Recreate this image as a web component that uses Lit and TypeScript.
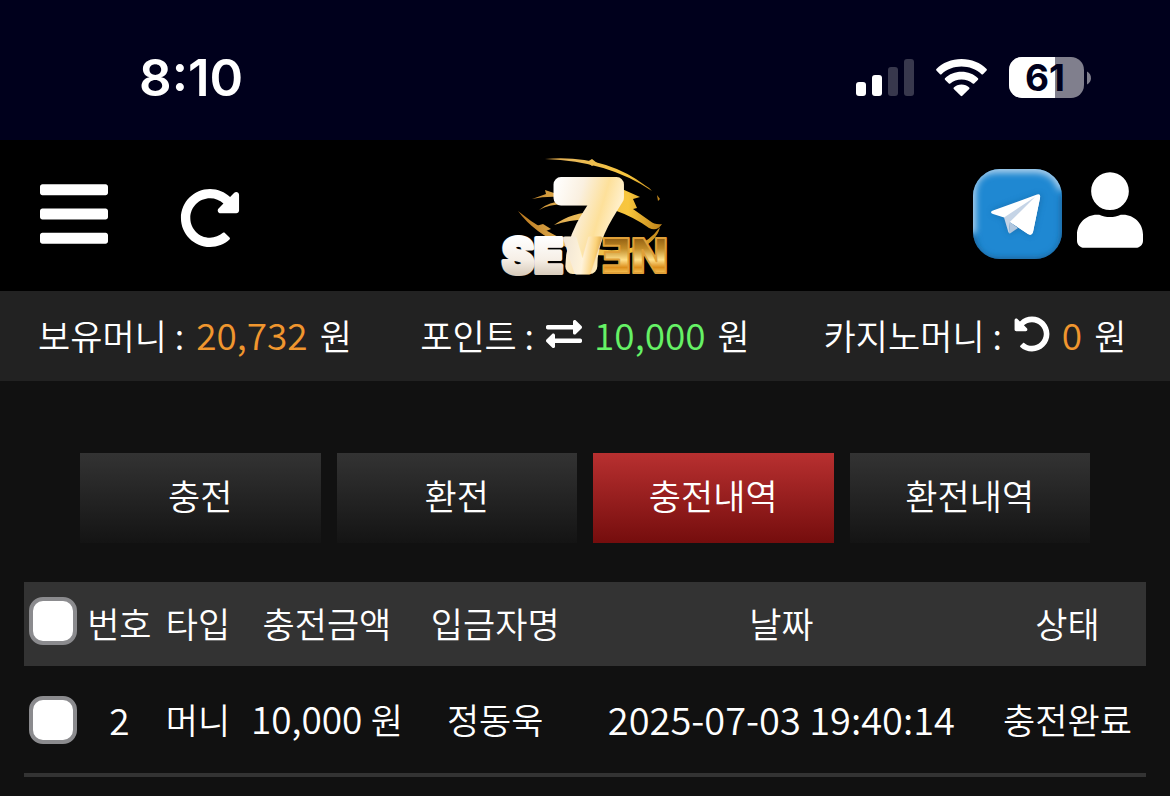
import { LitElement, html, css, svg } from "lit";
import { customElement, property, state } from "lit/decorators.js";
import { classMap } from "lit/directives/class-map.js";

const REDO =
  "M256.455 8c66.269.119 126.437 26.233 170.859 68.685l35.715-35.715C478.149 25.851 504 36.559 504 57.941V192c0 13.255-10.745 24-24 24H345.941c-21.382 0-32.09-25.851-16.971-40.971l41.75-41.75c-30.864-28.899-70.801-44.907-113.23-45.273-92.398-.798-170.283 73.977-169.484 169.442C88.764 348.009 162.184 424 256 424c41.127 0 79.997-14.678 110.629-41.556 4.743-4.161 11.906-3.908 16.368.553l39.662 39.662c4.872 4.872 4.631 12.815-.482 17.433C378.202 479.813 319.926 504 256 504 119.034 504 8.001 392.967 8 256.002 7.991 119.193 119.646 7.755 256.455 8z";
const BARS =
  "M16 132h416c8.837 0 16-7.163 16-16V76c0-8.837-7.163-16-16-16H16C7.163 60 0 67.163 0 76v40c0 8.837 7.163 16 16 16zm0 160h416c8.837 0 16-7.163 16-16v-40c0-8.837-7.163-16-16-16H16c-8.837 0-16 7.163-16 16v40c0 8.837 7.163 16 16 16zm0 160h416c8.837 0 16-7.163 16-16v-40c0-8.837-7.163-16-16-16H16c-8.837 0-16 7.163-16 16v40c0 8.837 7.163 16 16 16z";
const USER =
  "M224 256c70.7 0 128-57.3 128-128S294.7 0 224 0 96 57.3 96 128s57.3 128 128 128zm89.6 32h-16.7c-22.2 10.2-46.9 16-72.9 16s-50.6-5.8-72.9-16h-16.7C60.2 288 0 348.2 0 422.4V464c0 26.5 21.5 48 48 48h352c26.5 0 48-21.5 48-48v-41.6c0-74.2-60.2-134.4-134.4-134.4z";
const EXCHANGE =
  "M0 168v-16c0-13.255 10.745-24 24-24h360V80c0-21.367 25.899-32.042 40.971-16.971l80 80c9.372 9.373 9.372 24.569 0 33.941l-80 80C409.956 271.982 384 261.456 384 240v-48H24c-13.255 0-24-10.745-24-24zm488 152H128v-48c0-21.314-25.862-32.08-40.971-16.971l-80 80c-9.372 9.373-9.372 24.569 0 33.941l80 80C102.057 463.997 128 453.437 128 432v-48h360c13.255 0 24-10.745 24-24v-16c0-13.255-10.745-24-24-24z";

@customElement("status-bar")
class StatusBar extends LitElement {
  static styles = css`
    :host {
      display: flex;
      justify-content: space-between;
      align-items: center;
      height: 140px;
      box-sizing: border-box;
      padding: 16px 78px 0 139px;
      background: #00001c;
      color: #fff;
    }
    .clock {
      font: 600 51px/60px Inter, sans-serif;
    }
    .icons {
      display: flex;
      align-items: center;
      gap: 22px;
    }
    svg {
      display: block;
      overflow: visible;
    }
    .level {
      font: 700 37px Inter, sans-serif;
    }
  `;
  render() {
    return html`
      <span class="clock">8:10</span>
      <div class="icons">
        <svg width="58" height="42" viewBox="0 0 58 42" fill="#fff" aria-hidden="true">
          <rect x="0" y="25" width="10" height="14" rx="3" />
          <rect x="16" y="18" width="10" height="21" rx="3" />
          <rect x="32" y="10" width="10" height="29" rx="3" opacity=".22" />
          <rect x="48" y="2" width="10" height="37" rx="3" opacity=".22" />
        </svg>
        <svg width="51" height="42" viewBox="0 0 51 42" fill="#fff" aria-hidden="true">
          <path d="M25.500 2C35.500 2 44.500 5.800 50.600 12Q51.300 12.700 50.600 13.500L47 17.200Q46.300 17.800 45.500 17.200C40 12.300 33 9.600 25.500 9.600S11 12.300 5.500 17.200Q4.700 17.800 4 17.200L.4 13.500Q-.3 12.700 .4 12C6.500 5.800 15.500 2 25.500 2z" />
          <path d="M25.500 14.800C32 14.800 37.700 17.200 42 21.200Q42.600 22 42 22.700L38.200 26.500Q37.500 27.100 36.700 26.500C33.600 23.900 29.800 22.500 25.500 22.500S17.400 23.900 14.300 26.500Q13.500 27.100 12.800 26.500L9 22.700Q8.400 22 9 21.200C13.300 17.200 19 14.800 25.500 14.800z" />
          <path d="M25.500 27.600C28.500 27.600 31.200 28.700 33.200 30.400Q33.900 31.200 33.200 32L26.300 38.800Q25.500 39.500 24.700 38.800L17.800 32Q17.100 31.200 17.800 30.400C19.800 28.700 22.500 27.600 25.500 27.600z" />
        </svg>
        <svg width="83" height="42" viewBox="0 0 83 42" role="img" aria-label="61%">
          <defs>
            <clipPath id="shell"><rect width="75" height="41" rx="13" /></clipPath>
          </defs>
          <g clip-path="url(#shell)">
            <rect width="75" height="41" fill="#807f8d" />
            <rect width="46" height="41" fill="#fff" />
          </g>
          <path d="M78 14.500C83.300 17 83.300 25 78 27.500z" fill="#807f8d" />
          <text class="level" x="36" y="34" text-anchor="middle" fill="#00001c">61</text>
        </svg>
      </div>
    `;
  }
}

@customElement("seven-logo")
class SevenLogo extends LitElement {
  static styles = css`
    :host,
    svg {
      display: block;
    }
    svg {
      overflow: visible;
    }
    .seven {
      font: 700 118px "Liberation Sans", sans-serif;
    }
    .word {
      font: 900 48px Inter, sans-serif;
    }
  `;
  render() {
    return html`
      <svg width="170" height="124" viewBox="0 0 170 124" role="img" aria-label="SEVEN">
        <defs>
          <linearGradient id="pearl" gradientUnits="userSpaceOnUse" x1="55" y1="25" x2="122" y2="45">
            <stop offset="0" stop-color="#fff" />
            <stop offset=".4" stop-color="#faf0e0" />
            <stop offset=".75" stop-color="#fde09a" />
            <stop offset="1" stop-color="#fff0cc" />
          </linearGradient>
          <linearGradient id="gold" gradientUnits="userSpaceOnUse" x1="0" y1="82" x2="0" y2="120">
            <stop offset="0" stop-color="#8c5a10" />
            <stop offset=".3" stop-color="#c08a26" />
            <stop offset=".6" stop-color="#ffe08a" />
            <stop offset=".8" stop-color="#dd8f1c" />
            <stop offset="1" stop-color="#ffd66b" />
          </linearGradient>
          <linearGradient id="silver" gradientUnits="userSpaceOnUse" x1="0" y1="82" x2="0" y2="120">
            <stop offset="0" stop-color="#fff" />
            <stop offset=".6" stop-color="#f6efe6" />
            <stop offset="1" stop-color="#d8cbbb" />
          </linearGradient>
          <linearGradient id="blend" gradientUnits="userSpaceOnUse" x1="62" y1="90" x2="106" y2="96">
            <stop offset="0" stop-color="#efe4d4" />
            <stop offset=".5" stop-color="#fff3da" />
            <stop offset=".75" stop-color="#fbd27a" />
            <stop offset="1" stop-color="#c98a24" />
          </linearGradient>
          <linearGradient id="streak" gradientUnits="userSpaceOnUse" x1="18" y1="0" x2="165" y2="0">
            <stop offset="0" stop-color="#b9771c" />
            <stop offset=".35" stop-color="#e8b85a" />
            <stop offset=".75" stop-color="#f8c63c" />
            <stop offset="1" stop-color="#b87a14" />
          </linearGradient>
        </defs>
        <g fill="url(#streak)">
          <path d="M45 4Q104-1 146 31Q150 33 152 36Q108 6 45 4z" />
          <path d="M87 7l5-3 5 4-5 3z" />
          <path d="M32 44L46 39 45 35 54 38 70 41 68 43Q50 40 32 44z" />
          <path d="M39 55Q52 44 72 47L70 50Q52 48 39 55z" />
          <path d="M54 70Q72 57 96 57L92 65Q72 64 54 70z" />
          <path d="M122 34L140 42 133 44 137 53 133 54 150 66Q155 70 162 69 157 77 149 73 134 62 114 55z" />
          <path d="M18 56Q42 76 72 88Q108 100 134 92 150 86 160 72 157 87 134 97 102 106 66 92 34 78 18 56z" />
          <path d="M36 71l7-2 8 5-5 2z" />
          <path d="M157 40l3 4-2 2z" />
        </g>
        <text class="seven" x="56" y="111" fill="url(#pearl)" stroke="url(#pearl)" stroke-width="15" stroke-linejoin="round">7</text>
        <text class="word" x="2" y="118" stroke-linejoin="round"><tspan fill="url(#silver)" stroke="url(#silver)" stroke-width="4">SE</tspan><tspan fill="url(#blend)" stroke="url(#blend)" stroke-width="3">V</tspan><tspan fill="url(#gold)" stroke="#e0a038" stroke-width="2">ƎN</tspan></text>
      </svg>
    `;
  }
}

@customElement("site-header")
class SiteHeader extends LitElement {
  static styles = css`
    :host {
      display: grid;
      grid-template-columns: 1fr auto 1fr;
      align-items: center;
      height: 151px;
      box-sizing: border-box;
      padding: 0 27px 0 40px;
      background: #000;
    }
    .side {
      display: flex;
      align-items: center;
      gap: 72px;
      padding-bottom: 4px;
    }
    .end {
      justify-content: flex-end;
      gap: 15px;
    }
    seven-logo {
      margin: 2px 13px 0 0;
    }
    button,
    a {
      display: block;
      padding: 0;
      border: 0;
      background: none;
      color: #fff;
      cursor: pointer;
    }
    svg {
      display: block;
      fill: currentColor;
    }
    .lower {
      padding-top: 8px;
    }
    .raise {
      padding-bottom: 8px;
    }
  `;
  render() {
    return html`
      <div class="side">
        <button aria-label="메뉴"><svg width="68" height="78" viewBox="0 0 448 512"><path d=${BARS} /></svg></button>
        <button class="lower" aria-label="새로고침"><svg width="60" height="60" viewBox="0 0 512 512"><path d=${REDO} /></svg></button>
      </div>
      <seven-logo></seven-logo>
      <div class="side end">
        <a href="#telegram" aria-label="텔레그램">
          <svg width="89" height="90" viewBox="0 0 89 90">
            <defs>
              <clipPath id="tile"><rect width="89" height="90" rx="27" /></clipPath>
              <filter id="soft" x="-20%" y="-20%" width="140%" height="140%"><feGaussianBlur stdDeviation="3" /></filter>
            </defs>
            <g clip-path="url(#tile)">
              <rect width="89" height="90" fill="#1f88d2" />
              <path d="M-2 66Q0 93 26 93H63Q91 92 92 64V26" fill="none" stroke="#1c5f94" stroke-width="8" filter="url(#soft)" />
              <path d="M-2 64V26Q-2 -1 26 -1H63Q84 0 90 20" fill="none" stroke="#a9cdea" stroke-width="10" filter="url(#soft)" />
            </g>
            <path d="M21 45Q17 43 21 41L65 26Q69 24 68 29L60 63Q59 68 55 65L46 59 38 64Q36 65 35 62L31 49z" fill="#12598f" opacity=".5" filter="url(#soft)" />
            <path d="M20 45Q16 43 20 41.500L64 25.500Q68 24 67 29L60 63Q59 67 55 65L37 53 31 48.500z" fill="#fff" />
            <path d="M31 48.500L62 28 37 53 36 64Q35 63 35 62z" fill="#c5d4e6" />
            <path d="M37 53L45 59 37 64.500Q36 65 36 63z" fill="#b0c6de" />
            <path d="M37 53L65 26.500 67 29 60 63Q59 67 55 65z" fill="#fff" />
          </svg>
        </a>
        <button class="raise" aria-label="내 정보"><svg width="66" height="76" viewBox="0 0 448 512"><path d=${USER} /></svg></button>
      </div>
    `;
  }
}

@customElement("balance-bar")
class BalanceBar extends LitElement {
  static styles = css`
    :host {
      display: grid;
      grid-template-columns: repeat(3, 1fr);
      align-items: center;
      height: 90px;
      box-sizing: border-box;
      padding-bottom: 4px;
      background: #222;
      color: #fff;
      font: 350 35px/48px "Noto Sans CJK KR", sans-serif;
    }
    .item {
      display: flex;
      justify-content: center;
      align-items: baseline;
      gap: 12px;
      white-space: nowrap;
    }
    .num {
      font-size: 37px;
    }
    .orange {
      color: #f0962e;
    }
    .green {
      color: #66f266;
    }
    button {
      align-self: center;
      padding: 0;
      border: 0;
      background: none;
      color: #fff;
      cursor: pointer;
    }
    svg {
      display: block;
      fill: currentColor;
    }
  `;
  render() {
    return html`
      <div class="item"><span>보유머니 :</span><span class="num orange">20,732</span><span>원</span></div>
      <div class="item">
        <span>포인트 :</span>
        <button aria-label="포인트 전환"><svg width="36" height="36" viewBox="0 0 512 512"><path d=${EXCHANGE} /></svg></button>
        <span class="num green">10,000</span><span>원</span>
      </div>
      <div class="item">
        <span>카지노머니 :</span>
        <button aria-label="카지노머니 회수">
          <svg width="36" height="36" viewBox="0 0 512 512">${svg`<path transform="matrix(-1 0 0 1 512 0)" d=${REDO} />`}</svg>
        </button>
        <span class="num orange">0</span><span>원</span>
      </div>
    `;
  }
}

interface Entry {
  no: number;
  type: string;
  amount: string;
  name: string;
  date: string;
  status: string;
}

@customElement("history-table")
class HistoryTable extends LitElement {
  @property({ attribute: false }) entries: Entry[] = [];

  static styles = css`
    :host {
      display: block;
    }
    table {
      width: 100%;
      table-layout: fixed;
      border-collapse: collapse;
      color: #fff;
      font: 350 35px/48px "Noto Sans CJK KR", sans-serif;
      white-space: nowrap;
    }
    th,
    td {
      padding: 0 0 2px;
      font-weight: 350;
      text-align: center;
    }
    th {
      height: 82px;
      background: #333;
    }
    td {
      height: 105px;
      border-bottom: 4px solid #333;
    }
    th.check {
      padding-bottom: 6px;
      height: 78px;
    }
    td.check {
      padding: 0;
    }
    .check { width: 5%; }
    .no { width: 7%; }
    .type { width: 7%; }
    .amount { width: 16%; }
    .name { width: 14%; }
    .status { width: 14%; }
    .num {
      font-size: 37px;
    }
    .date {
      font-size: 38px;
    }
    input {
      appearance: none;
      display: block;
      box-sizing: border-box;
      width: 48px;
      height: 48px;
      margin: 0 0 0 5px;
      border: 4px solid #8b8b8e;
      border-radius: 14px;
      background: #fff;
    }
    input:checked {
      background: #2f7bf0;
    }
  `;
  render() {
    return html`
      <table>
        <thead>
          <tr>
            <th class="check"><input type="checkbox" aria-label="전체 선택" /></th>
            <th class="no">번호</th>
            <th class="type">타입</th>
            <th class="amount">충전금액</th>
            <th class="name">입금자명</th>
            <th>날짜</th>
            <th class="status">상태</th>
          </tr>
        </thead>
        <tbody>
          ${this.entries.map(
            (e) => html`<tr>
              <td class="check"><input type="checkbox" aria-label="${e.no}번 선택" /></td>
              <td class="num">${e.no}</td>
              <td>${e.type}</td>
              <td><span class="num">${e.amount} </span>원</td>
              <td>${e.name}</td>
              <td class="date">${e.date}</td>
              <td>${e.status}</td>
            </tr>`
          )}
        </tbody>
      </table>
    `;
  }
}

@customElement("app-root")
class AppRoot extends LitElement {
  @state() private tab = 2;

  private tabs = ["충전", "환전", "충전내역", "환전내역"];
  private entries: Entry[] = [
    { no: 2, type: "머니", amount: "10,000", name: "정동욱", date: "2025-07-03 19:40:14", status: "충전완료" },
  ];

  static styles = css`
    :host {
      display: block;
      min-height: 100vh;
      background: #111;
    }
    main {
      padding: 72px 24px 0;
    }
    .tabs {
      display: grid;
      grid-template-columns: repeat(4, 1fr);
      gap: 16px;
      padding: 0 56px;
      margin-bottom: 39px;
    }
    .tab {
      height: 90px;
      padding: 0 0 6px;
      border: 0;
      background: linear-gradient(#333, #141414);
      color: #fff;
      font: 350 35px/48px "Noto Sans CJK KR", sans-serif;
      cursor: pointer;
    }
    .active {
      background: linear-gradient(#b83030, #750d0d);
    }
  `;
  render() {
    return html`
      <status-bar></status-bar>
      <site-header></site-header>
      <balance-bar></balance-bar>
      <main>
        <nav class="tabs">
          ${this.tabs.map(
            (t, i) => html`<button
              class=${classMap({ tab: true, active: i === this.tab })}
              @click=${() => (this.tab = i)}
            >${t}</button>`
          )}
        </nav>
        <history-table .entries=${this.entries}></history-table>
      </main>
    `;
  }
}
